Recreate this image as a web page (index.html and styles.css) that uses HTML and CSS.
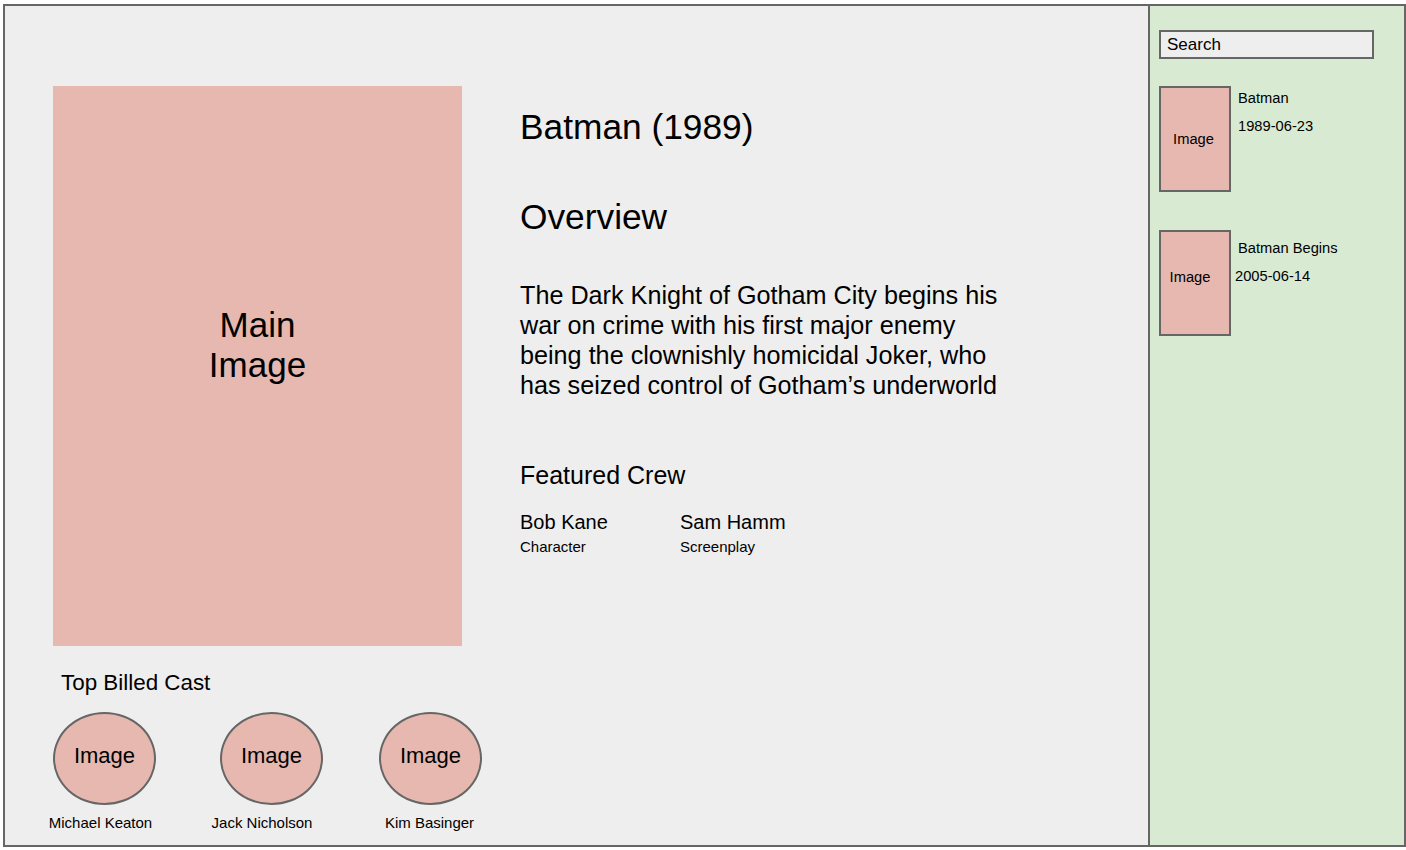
FILE: index.html
```html
<!DOCTYPE html>
<html lang="en">
<head>
<meta charset="utf-8">
<title>Batman (1989)</title>
<link rel="stylesheet" href="styles.css">
</head>
<body>
<div class="frame">
  <main class="main">
    <section class="left">
      <div class="poster"><span class="poster-label">Main<br>Image</span></div>
      <h3 class="cast-title">Top Billed Cast</h3>
      <div class="cast">
        <div class="cast-item">
          <div class="avatar">Image</div>
          <div class="cast-name shift-a">Michael Keaton</div>
        </div>
        <div class="cast-item second">
          <div class="avatar">Image</div>
          <div class="cast-name shift-b">Jack Nicholson</div>
        </div>
        <div class="cast-item third">
          <div class="avatar">Image</div>
          <div class="cast-name shift-c">Kim Basinger</div>
        </div>
      </div>
    </section>
    <section class="info">
      <h1 class="title">Batman (1989)</h1>
      <h2 class="overview-title">Overview</h2>
      <p class="overview">The Dark Knight of Gotham City begins his war on crime with his first major enemy being the clownishly homicidal Joker, who has seized control of Gotham’s underworld</p>
      <h3 class="crew-title">Featured Crew</h3>
      <div class="crew">
        <div class="crew-item">
          <div class="crew-name">Bob Kane</div>
          <div class="crew-role">Character</div>
        </div>
        <div class="crew-item">
          <div class="crew-name">Sam Hamm</div>
          <div class="crew-role">Screenplay</div>
        </div>
      </div>
    </section>
  </main>
  <aside class="sidebar">
    <div class="search">Search</div>
    <div class="result">
      <div class="thumb">Image</div>
      <div class="result-text">
        <div class="result-title">Batman</div>
        <div class="result-date">1989-06-23</div>
      </div>
    </div>
    <div class="result second">
      <div class="thumb raised">Image</div>
      <div class="result-text">
        <div class="result-title">Batman Begins</div>
        <div class="result-date nudge">2005-06-14</div>
      </div>
    </div>
  </aside>
</div>
</body>
</html>
```

FILE: styles.css
```css
* { box-sizing: border-box; }

html, body {
  margin: 0;
  padding: 0;
  background: #ffffff;
}

body {
  font-family: "Liberation Sans", Arial, sans-serif;
  color: #000;
}

.frame {
  margin: 4px 0 0 3px;
  width: 1403px;
  height: 843px;
  border: 2px solid #666666;
  display: flex;
  background: #eeeeee;
}

.main {
  flex: 1;
  display: flex;
  padding: 80px 0 0 48px;
  background: #eeeeee;
}

.left {
  width: 409px;
  flex-shrink: 0;
}

.poster {
  width: 409px;
  height: 560px;
  background: #e6b8af;
  display: flex;
  align-items: center;
  justify-content: center;
  padding-bottom: 43px;
}

.poster-label {
  font-size: 35px;
  line-height: 40px;
  text-align: center;
}

.cast-title {
  margin: 24px 0 0 0;
  padding-left: 8px;
  font-size: 22.4px;
  line-height: 26px;
  font-weight: normal;
}

.cast {
  display: flex;
  margin-top: 16px;
}

.cast-item {
  width: 103px;
  display: flex;
  flex-direction: column;
  align-items: center;
}

.cast-item.second { margin-left: 64px; }
.cast-item.third { margin-left: 56px; }

.avatar {
  width: 103px;
  height: 93px;
  border: 2px solid #666666;
  border-radius: 50%;
  background: #e6b8af;
  display: flex;
  align-items: center;
  justify-content: center;
  font-size: 22px;
  padding-bottom: 5px;
}

.cast-name {
  margin-top: 9px;
  font-size: 15px;
  line-height: 18px;
  white-space: nowrap;
}

.shift-a { margin-right: 8px; }
.shift-b { margin-right: 19px; }
.shift-c { margin-right: 2px; }

.info {
  margin-left: 58px;
  padding-top: 21px;
}

.title {
  margin: 0;
  font-size: 35.3px;
  line-height: 40px;
  font-weight: normal;
}

.overview-title {
  margin: 50px 0 0 0;
  font-size: 35.3px;
  line-height: 40px;
  font-weight: normal;
}

.overview {
  margin: 43px 0 0 0;
  width: 500px;
  font-size: 25.2px;
  line-height: 30px;
}

.crew-title {
  margin: 61px 0 0 0;
  font-size: 25px;
  line-height: 28px;
  font-weight: normal;
}

.crew {
  display: flex;
  margin-top: 21px;
}

.crew-item {
  width: 160px;
}

.crew-name {
  font-size: 20px;
  line-height: 24px;
}

.crew-role {
  margin-top: 4px;
  font-size: 15px;
  line-height: 18px;
}

.sidebar {
  width: 256px;
  flex-shrink: 0;
  background: #d9ead3;
  border-left: 2px solid #666666;
  padding: 24px 0 0 9px;
}

.search {
  width: 215px;
  height: 29px;
  border: 2px solid #666666;
  background: #eeeeee;
  padding-left: 6px;
  display: flex;
  align-items: center;
  font-size: 17px;
}

.result {
  display: flex;
  margin-top: 27px;
}

.result.second {
  margin-top: 38px;
}

.thumb {
  width: 72px;
  height: 106px;
  border: 2px solid #666666;
  background: #e6b8af;
  display: flex;
  align-items: center;
  justify-content: center;
  font-size: 14.7px;
  padding-bottom: 0;
  padding-right: 3px;
}

.thumb.raised {
  padding-bottom: 12px;
  padding-right: 10px;
}

.result-text {
  margin-left: 7px;
  font-size: 14.7px;
  line-height: 18px;
}

.result-title {
  margin-top: 3px;
}

.result.second .result-title {
  margin-top: 9px;
}

.result-date {
  margin-top: 10px;
}

.result-date.nudge {
  margin-left: -3px;
}
```
